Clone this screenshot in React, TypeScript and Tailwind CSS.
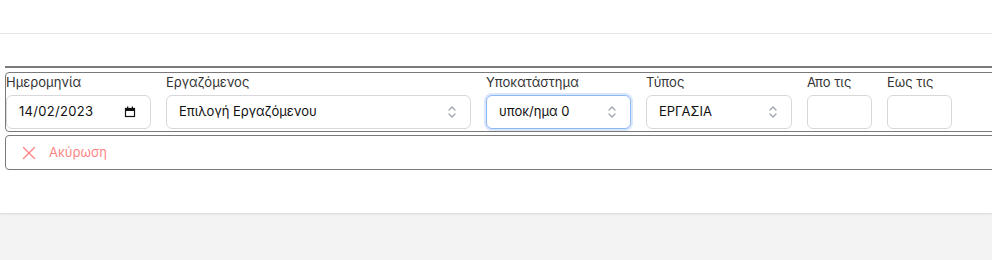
import { X } from "lucide-react";

function UpDown() {
  return (
    <svg width="10" height="16" viewBox="0 0 10 16" fill="none" stroke="#9ca3af" strokeWidth="1.3" strokeLinecap="round" strokeLinejoin="round">
      <path d="M2 6l3-3 3 3" />
      <path d="M2 10l3 3 3-3" />
    </svg>
  );
}

function CalendarGlyph() {
  return (
    <svg width="12" height="12" viewBox="0 0 12 12" fill="none">
      <rect x="1.5" y="2.5" width="9" height="8" stroke="#111" strokeWidth="1.2" />
      <rect x="1" y="2" width="10" height="3" fill="#111" />
      <rect x="3" y="0.5" width="1.3" height="2" fill="#111" />
      <rect x="7.7" y="0.5" width="1.3" height="2" fill="#111" />
    </svg>
  );
}

interface FieldProps {
  label: string;
  width: string;
  children?: React.ReactNode;
}

function Field({ label, width, children }: FieldProps) {
  return (
    <div className={`flex flex-col ${width}`}>
      <span className="h-[20px] leading-[18px] text-[13px] text-[#333]">{label}</span>
      <div className="mt-[2px]">{children}</div>
    </div>
  );
}

function SelectBox({ value, focused }: { value: string; focused?: boolean }) {
  return (
    <div
      className={`h-[34px] flex items-center justify-between pl-[12px] pr-[13px] rounded-md bg-white text-[13px] text-[#111] border ${
        focused ? "border-[#8db8f6] ring-2 ring-[#dbe7fc]" : "border-[#d8d8dc]"
      }`}
    >
      <span>{value}</span>
      <UpDown />
    </div>
  );
}

export default function App() {
  return (
    <div className="min-h-screen bg-[#f3f3f3]" style={{ fontFamily: "Inter, 'Noto Sans', sans-serif" }}>
      <div className="bg-white shadow-[0_1px_2px_rgba(0,0,0,0.12)] overflow-hidden">
        <div className="h-[34px] border-b border-[#e8e8e8]" />
        <div className="pl-[5px] pt-[32px] pb-[43px]">
          <div className="h-[2px] bg-[#7a7a7a] -mr-5" />
          <div className="mt-[4px] -mr-5 border border-[#7a7a7a] rounded-[4px] pb-[2px] flex gap-[15px]">
            <Field label="Ημερομηνία" width="w-[145px]">
              <div className="h-[34px] flex items-center justify-between pl-[12px] pr-[14px] rounded-md border border-[#d8d8dc] text-[13px] text-[#111] tracking-[0.3px]">
                <span>14/02/2023</span>
                <CalendarGlyph />
              </div>
            </Field>
            <Field label="Εργαζόμενος" width="w-[305px]">
              <SelectBox value="Επιλογή Εργαζόμενου" />
            </Field>
            <Field label="Υποκατάστημα" width="w-[145px]">
              <SelectBox value="υποκ/ημα 0" focused />
            </Field>
            <Field label="Τύπος" width="w-[146px]">
              <SelectBox value="ΕΡΓΑΣΙΑ" />
            </Field>
            <Field label="Απο τις" width="w-[65px]">
              <div className="h-[34px] rounded-md border border-[#d8d8dc]" />
            </Field>
            <Field label="Εως τις" width="w-[65px]">
              <div className="h-[34px] rounded-md border border-[#d8d8dc]" />
            </Field>
          </div>
          <div className="mt-[3px] -mr-5 h-[35px] border border-[#7a7a7a] rounded-[4px] flex items-center pl-[12px] gap-[9px] text-[13px] text-[#ff8585]">
            <X className="w-[22px] h-[22px]" strokeWidth={1.5} />
            <span>Ακύρωση</span>
          </div>
        </div>
      </div>
    </div>
  );
}
